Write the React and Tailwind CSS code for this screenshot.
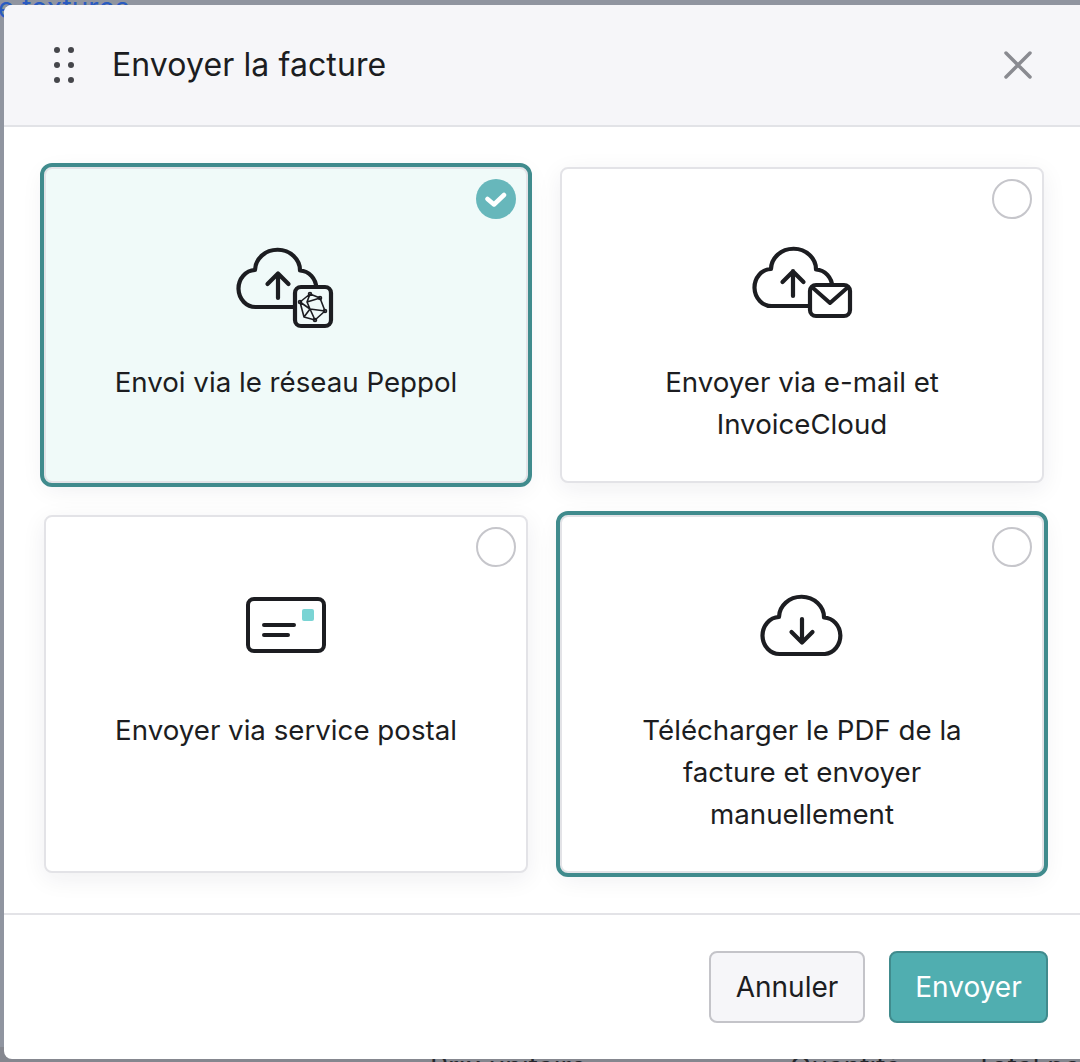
import React from 'react';

const font = { fontFamily: 'Inter, "Liberation Sans", sans-serif' };

function Cloud({ d, arrow, fill = 'none' }) {
  return (
    <g fill={fill} stroke="#1c1d21" strokeWidth="4.2" strokeLinecap="round" strokeLinejoin="round">
      <path d={d} />
      <path d={arrow} fill="none" />
    </g>
  );
}

const cloudPath = 'M35 74A17 18.5 0 0 1 34 37A22.500 20.500 0 0 1 79 37.500A17 18.300 0 0 1 80 74Z';

function PeppolIcon() {
  return (
    <svg width="130" height="110" viewBox="1 0 130 110" className="block">
      <g transform="translate(1 3)">
        <Cloud d={cloudPath} arrow="M57 65V41M46.500 51L57 40.500L67.500 51" />
      </g>
      <rect x="75" y="57" width="36" height="39" rx="6" fill="#f0faf9" stroke="#1c1d21" strokeWidth="4.200" />
      <g fill="none" stroke="#1c1d21" strokeWidth="1.600" strokeLinejoin="round">
        <path d="M90 64L100 68L105 81L95 90L84 87L80 72ZM80 72L90 79L105 81M90 79L84 87M90 64L87 72L90 79L95 90M87 72L100 68" />
        <circle cx="90" cy="64" r="1.500" />
        <circle cx="100" cy="68" r="1.500" />
        <circle cx="105" cy="81" r="1.500" />
        <circle cx="95" cy="90" r="1.500" />
        <circle cx="80" cy="72" r="1.500" />
      </g>
    </svg>
  );
}

function MailIcon() {
  return (
    <svg width="130" height="110" viewBox="-3 0 130 110" className="block">
      <g transform="translate(-3 2)">
        <Cloud d={cloudPath} arrow="M56 64V39M45.500 50L56 39.500L66.500 50" />
      </g>
      <rect x="70" y="55" width="40" height="31" rx="6" fill="#fff" stroke="#1c1d21" strokeWidth="4.200" />
      <path d="M73 58L90 73L107 58" fill="none" stroke="#1c1d21" strokeWidth="4" strokeLinecap="round" strokeLinejoin="round" />
    </svg>
  );
}

function PostalIcon() {
  return (
    <svg width="130" height="110" viewBox="-9 -2 130 110" className="block">
      <rect x="18" y="19" width="76" height="52" rx="6" fill="none" stroke="#1c1d21" strokeWidth="4" />
      <path d="M34 45H64M34 55H58" fill="none" stroke="#1c1d21" strokeWidth="4" strokeLinecap="round" />
      <rect x="72" y="29" width="12" height="12" rx="2" fill="#7ad4d4" />
    </svg>
  );
}

function DownloadIcon() {
  return (
    <svg width="130" height="110" viewBox="-8 -2 130 110" className="block">
      <Cloud d={cloudPath} arrow="M57 39V62M46.500 52L57 62.500L67.500 52" />
    </svg>
  );
}

function Card({ icon, label, checked, selected, tinted, textWidth = 'max-w-[400px]' }) {
  return (
    <div
      className={`relative flex flex-col items-center rounded-lg border-2 border-[#e3e3e7] pt-[61px] shadow-[0_6px_24px_rgba(30,30,50,0.07)] ${
        tinted ? 'bg-[#f0faf9]' : 'bg-white'
      } ${selected ? 'outline-4 outline-[#408b8d] rounded-[7px]' : ''}`}
    >
      {checked ? (
        <div className="absolute right-[10px] top-[10px] flex h-10 w-10 items-center justify-center rounded-full bg-[#67b7bb]">
          <svg width="22" height="22" viewBox="0 0 22 22">
            <path d="M2.500 11L9 16.500L19 7" fill="none" stroke="#fff" strokeWidth="4.500" strokeLinecap="round" strokeLinejoin="round" />
          </svg>
        </div>
      ) : (
        <div className="absolute right-[10px] top-[10px] h-10 w-10 rounded-full border-2 border-[#c6c6cb] bg-white" />
      )}
      {icon}
      <p className={`mt-[21px] text-center text-[27.7px] leading-[42px] text-[#1c1d21] ${textWidth}`}>{label}</p>
    </div>
  );
}

export default function App() {
  return (
    <div className="relative h-[1062px] w-[1080px] overflow-hidden bg-[#9095a0]" style={font}>
      {/* page behind the dialog, only its edges show */}
      <div className="absolute left-[-2px] top-[-12px] text-[28px] leading-[40px] text-[#2a5bc0]">e textures</div>
      <div className="absolute bottom-[-25px] left-0 h-[40px] w-full bg-[#85878f] text-[28px] leading-[40px] text-[#26272c]">
        <span className="absolute left-[430px]">Prix unitaire</span>
        <span className="absolute left-[790px]">Quantité</span>
        <span className="absolute left-[975px] whitespace-nowrap">Total par</span>
      </div>

      <div className="relative ml-1 mt-[5px] flex h-[1054px] w-[1084px] flex-col overflow-hidden rounded-lg bg-white">
        <header className="flex h-[122px] shrink-0 items-center border-b-2 border-[#e2e3e7] bg-[#f6f6f9]">
          <div className="ml-[50px] grid grid-cols-2 gap-x-2 gap-y-[9px]">
            {[0, 1, 2, 3, 4, 5].map(i => (
              <span key={i} className="h-[6px] w-[6px] rounded-full bg-[#45464b]" />
            ))}
          </div>
          <h1 className="ml-[38px] text-[32px] font-normal leading-[40px] tracking-[0.1px] text-[#1c1d21]">Envoyer la facture</h1>
          <button className="ml-[617px] flex h-[30px] w-[30px] items-center justify-center">
            <svg width="30" height="30" viewBox="0 0 30 30">
              <path d="M3 3L27 27M27 3L3 27" fill="none" stroke="#8a8b91" strokeWidth="3.500" strokeLinecap="round" />
            </svg>
          </button>
        </header>

        <div className="grid h-[786px] shrink-0 grid-cols-[484px_484px] grid-rows-[316px_358px] content-start gap-8 pl-10 pt-10">
          <Card icon={<PeppolIcon />} label="Envoi via le réseau Peppol" checked selected tinted />
          <Card icon={<MailIcon />} label="Envoyer via e-mail et InvoiceCloud" textWidth="max-w-[340px]" />
          <Card icon={<PostalIcon />} label="Envoyer via service postal" />
          <Card icon={<DownloadIcon />} label="Télécharger le PDF de la facture et envoyer manuellement" textWidth="max-w-[360px]" selected />
        </div>

        <footer className="flex h-[146px] shrink-0 items-start gap-6 border-t-2 border-[#e3e3e7] pl-[705px] pt-[36px]">
          <button className="h-[72px] w-[156px] rounded-lg border-2 border-[#c4c4c9] bg-[#f6f6f9] text-[28px] text-[#1c1d21]">Annuler</button>
          <button className="h-[72px] w-[159px] rounded-lg border-2 border-[#408b8d] bg-[#50aeb0] text-[28px] text-white">Envoyer</button>
        </footer>
      </div>
    </div>
  );
}
